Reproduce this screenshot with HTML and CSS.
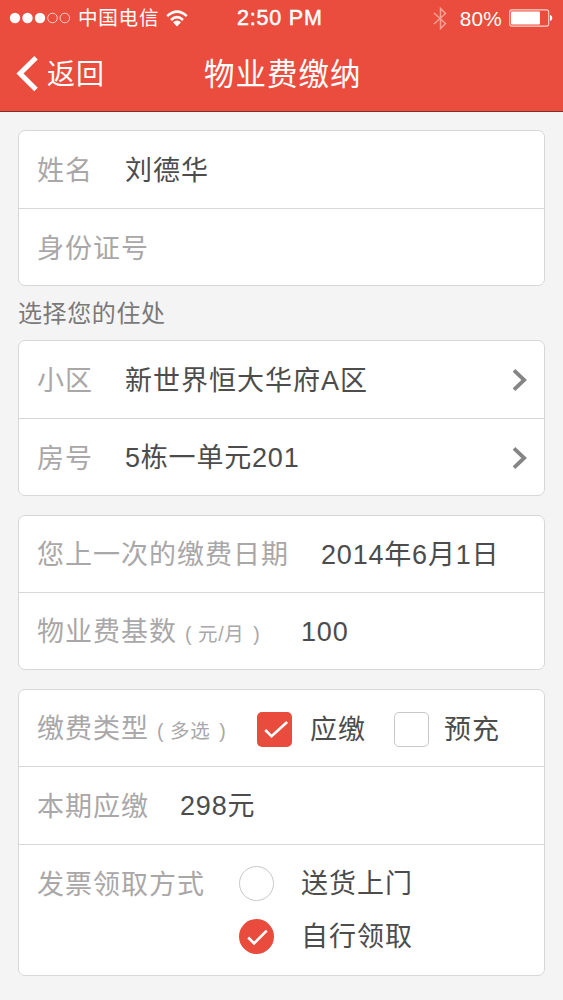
FILE: index.html
```html
<!DOCTYPE html>
<html lang="zh-CN">
<head>
<meta charset="utf-8">
<title>物业费缴纳</title>
<link rel="stylesheet" href="styles.css">
</head>
<body>
<header class="header">
  <div class="status">
    <div class="carrier">
      <svg class="signal" width="62" height="14" viewBox="0 0 62 14">
        <g fill="#fff"><circle cx="6" cy="7" r="5.2"/><circle cx="18.5" cy="7" r="5.2"/><circle cx="31" cy="7" r="5.2"/></g>
        <g fill="none" stroke="#fbd3cb" stroke-width="1"><circle cx="43.5" cy="7" r="4.8"/><circle cx="55.8" cy="7" r="4.8"/></g>
      </svg>
      <span class="carrier-name">中国电信</span>
      <svg class="wifi" width="22" height="17" viewBox="0 0 22 17">
        <g fill="none" stroke="#fff" stroke-width="2.5"><path d="M1.2 6.1Q11-2.8 20.8 6.1"/><path d="M5 10Q11 4.3 17 10"/></g>
        <path d="M7 12.3Q11 8.7 15 12.3L11 16.5Z" fill="#fff"/>
      </svg>
    </div>
    <div class="time">2:50 PM</div>
    <div class="power">
      <svg class="bluetooth" width="14" height="23" viewBox="0 0 14 23" fill="none" stroke="#f5a193" stroke-width="1.5"><path d="M1 6L12.5 16.5L7.5 21.5V1.5L12.5 6.5L1 17"/></svg>
      <span class="percent">80%</span>
      <svg class="battery" width="44" height="18" viewBox="0 0 44 18">
        <rect x=".7" y=".9" width="39" height="16.2" rx="2.2" fill="none" stroke="#fbd3cb" stroke-width="1.1"/>
        <rect x="2" y="2.4" width="29" height="13.2" rx="1" fill="#fff"/>
        <path d="M41 6C44 6.5 44 11.5 41 12Z" fill="#fff"/>
      </svg>
    </div>
  </div>
  <nav class="nav">
    <a class="back"><svg width="22" height="36" viewBox="0 0 22 36" fill="none" stroke="#fff" stroke-width="5"><path d="M20 1.8L4 17.5L20 33.5"/></svg><span>返回</span></a>
    <h1 class="title">物业费缴纳</h1>
  </nav>
</header>
<main class="form">
  <section class="card">
    <div class="row"><span class="label short">姓名</span><span class="value">刘德华</span></div>
    <div class="row"><span class="label">身份证号</span></div>
  </section>
  <h2 class="section-title">选择您的住处</h2>
  <section class="card">
    <div class="row"><span class="label short">小区</span><span class="value">新世界恒大华府A区</span><svg class="chevron" width="16" height="24" viewBox="0 0 16 24"><path d="M2 2.4L12.2 12L2 21.6"/></svg></div>
    <div class="row"><span class="label short">房号</span><span class="value numeric">5栋一单元201</span><svg class="chevron" width="16" height="24" viewBox="0 0 16 24"><path d="M2 2.4L12.2 12L2 21.6"/></svg></div>
  </section>
  <section class="card billing">
    <div class="row"><span class="label date-label">您上一次的缴费日期</span><span class="value numeric">2014年6月1日</span></div>
    <div class="row"><span class="label base-label">物业费基数<small class="note"><i>(</i>元/月<i>)</i></small></span><span class="value numeric">100</span></div>
  </section>
  <section class="card payment">
    <div class="row">
      <span class="label type-label">缴费类型<small class="note"><i>(</i>多选<i>)</i></small></span>
      <span class="box checked"><svg width="36" height="36" viewBox="0 0 36 36"><path d="M8.5 18.5L15 25L31 10.3"/></svg></span><span class="value option">应缴</span>
      <span class="box"></span><span class="value option">预充</span>
    </div>
    <div class="row"><span class="label due-label">本期应缴</span><span class="value numeric">298元</span></div>
    <div class="row delivery">
      <span class="label invoice-label">发票领取方式</span>
      <div class="choices">
        <div class="choice"><span class="box round"></span><span class="value">送货上门</span></div>
        <div class="choice"><span class="box round checked"><svg width="36" height="36" viewBox="0 0 36 36"><path d="M9.5 19L15.5 25L28.5 12"/></svg></span><span class="value">自行领取</span></div>
      </div>
    </div>
  </section>
</main>
</body>
</html>
```
FILE: styles.css
```css
* { box-sizing: border-box; }
body {
  margin: 0;
  height: 1000px;
  overflow: hidden;
  background: #f5f4f5;
  color: #4c4c4c;
  font-family: "Liberation Sans", "Noto Sans CJK SC", sans-serif;
}
svg { display: block; flex: none; }
span, h1, h2 { white-space: nowrap; }

.header { height: 112px; background: #ea4c3e; border-bottom: 1px solid #7d3029; color: #fff; }
.status { display: grid; grid-template-columns: 237px 1fr auto; height: 36px; align-items: center; padding-right: 10px; }
.carrier, .power { display: flex; align-items: center; }
.carrier { padding-left: 9px; }
.carrier-name { margin-left: 7px; font-size: 19.6px; letter-spacing: .7px; line-height: 30px; }
.wifi { margin-left: 7px; }
.time { font-size: 21.5px; letter-spacing: .8px; -webkit-text-stroke: .5px #fff; }
.percent { margin: 2px 7px 0 13px; font-size: 20.8px; letter-spacing: .2px; }

.nav { display: grid; grid-template-columns: 204px 1fr; height: 75px; align-items: center; }
.back { display: flex; align-items: center; padding-left: 16px; }
.back span { margin-left: 9px; padding-top: 2px; font-size: 28px; letter-spacing: 1px; line-height: 40px; }
.title { margin: 0; font-size: 30.5px; font-weight: 400; letter-spacing: 1px; line-height: 40px; }

.form { padding: 18px 18px 0; }
.card { height: 156px; border: 1px solid #d8d7d7; border-radius: 7px; background: #fff; }
.row { display: flex; align-items: center; height: 77px; padding-left: 18px; }
.row + .row { height: 78px; border-top: 1px solid #d8d7d7; }
.label, .value { padding-top: 2px; font-size: 27px; letter-spacing: 1px; line-height: 40px; }
.label { color: #a9a7a7; }
.value.numeric { padding-top: 1px; letter-spacing: .8px; }
.short { width: 88px; }
.date-label { width: 284px; }
.base-label { width: 264px; }
.type-label { width: 219px; }
.due-label { width: 143px; }
.invoice-label { width: 202px; }
.note { margin-left: 8px; font-size: 19.5px; letter-spacing: .6px; }
.note i { font-style: normal; }
.note i:first-child { margin-right: 6px; }
.note i:last-child { margin-left: 9px; }
.chevron { margin: 0 16px 0 auto; fill: none; stroke: #858585; stroke-width: 3.8; }

.section-title { margin: 0; height: 54px; padding-top: 1px; color: #7a7979; font-size: 24px; font-weight: 400; letter-spacing: .6px; line-height: 54px; }
.billing { height: 155px; margin-top: 19px; }
.billing .row:first-child { height: 76px; }
.payment { height: 287px; margin-top: 19px; }
.payment .row:first-child { height: 76px; padding-top: 2px; }

.box { flex: none; width: 35px; height: 35px; border: 1px solid #c9c8c8; border-radius: 5px; background: #fff; }
.checked { border: 0; background: #e94b3d; }
.checked svg { width: 100%; height: 100%; fill: none; stroke: #fff; stroke-width: 2.7; }
.type-label + .box { margin-left: 1px; }
.option { margin-left: 18px; }
.option + .box { margin-left: 28px; }
.option + .box + .option { margin-left: 15px; }
.payment .delivery.delivery { align-items: flex-start; height: 131px; padding-top: 18px; }
.choices { display: flex; flex-direction: column; gap: 13px; }
.choice { display: flex; align-items: center; height: 40px; }
.choice .value { margin-left: 27px; }
.round { border-radius: 50%; }
```
